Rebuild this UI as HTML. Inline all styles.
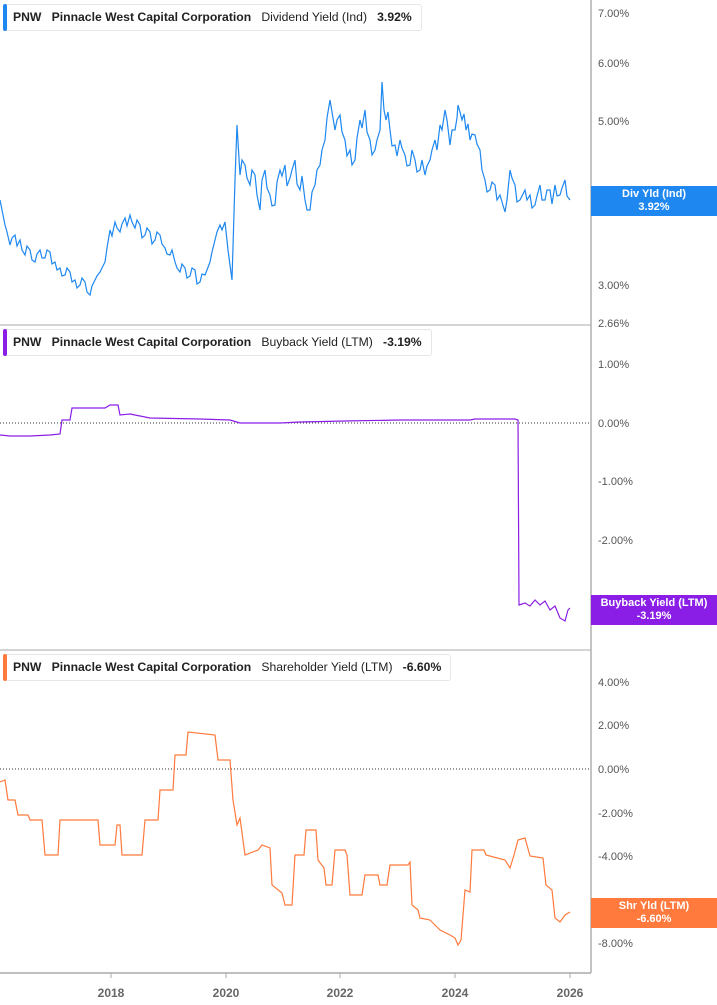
<!DOCTYPE html>
<html><head><meta charset="utf-8"><style>
body{margin:0;background:#fff;font-family:"Liberation Sans",sans-serif}
.leg{position:absolute;left:3px;height:25px;border:1px solid #e6e6e6;border-radius:3px;background:#fff;font-size:12.2px;color:#222;line-height:25px;white-space:nowrap;padding-left:9px;padding-right:9px}
.leg b{font-weight:bold}
.leg .bar{position:absolute;left:-1px;top:-1px;width:4px;height:27px;border-radius:2px}
.lab{position:absolute;left:591px;width:126px;height:30px;color:#fff;font-size:11px;font-weight:bold;text-align:center;line-height:13px;padding-top:2px;box-sizing:border-box}
</style></head><body>
<svg width="717" height="1005" style="position:absolute;left:0;top:0" font-family="Liberation Sans" font-size="11" fill="#555">
<line x1="591" y1="0" x2="591" y2="973" stroke="#888"/>
<line x1="0" y1="325" x2="591" y2="325" stroke="#aaa"/>
<line x1="0" y1="650" x2="591" y2="650" stroke="#aaa"/>
<line x1="0" y1="973" x2="591" y2="973" stroke="#aaa" stroke-width="1.5"/>
<line x1="0" y1="423" x2="591" y2="423" stroke="#333" stroke-dasharray="1,2"/>
<line x1="0" y1="769" x2="591" y2="769" stroke="#333" stroke-dasharray="1,2"/>
<g>
<text x="598" y="17">7.00%</text><text x="598" y="67">6.00%</text><text x="598" y="125">5.00%</text><text x="598" y="289">3.00%</text><text x="598" y="327">2.66%</text>
<text x="598" y="368">1.00%</text><text x="598" y="427">0.00%</text><text x="598" y="485">-1.00%</text><text x="598" y="544">-2.00%</text>
<text x="598" y="686">4.00%</text><text x="598" y="729">2.00%</text><text x="598" y="773">0.00%</text><text x="598" y="817">-2.00%</text><text x="598" y="860">-4.00%</text><text x="598" y="947">-8.00%</text>
</g>
<g font-weight="bold" font-size="12" fill="#666" text-anchor="middle">
<text x="111" y="997">2018</text><text x="226" y="997">2020</text><text x="340" y="997">2022</text><text x="455" y="997">2024</text><text x="570" y="997">2026</text>
</g>
<g stroke="#aaa"><line x1="111" y1="973" x2="111" y2="978"/><line x1="226" y1="973" x2="226" y2="978"/><line x1="340" y1="973" x2="340" y2="978"/><line x1="455" y1="973" x2="455" y2="978"/><line x1="570" y1="973" x2="570" y2="978"/></g>
<polyline fill="none" stroke="#1e88f0" stroke-width="1.2" points="0,200 3,215 5,225 7,232 10,245 12,238 15,235 17,246 20,240 22,250 25,255 27,246 30,250 32,260 35,262 37,254 40,250 42,258 45,258 47,250 50,252 52,264 55,262 57,270 60,268 62,276 65,275 67,268 70,272 72,282 75,280 77,288 80,285 82,278 85,282 87,292 90,295 92,286 95,280 97,276 100,272 102,268 105,262 107,248 110,230 112,236 115,222 117,228 120,232 122,224 125,218 127,226 130,215 132,222 135,228 137,220 140,225 142,238 145,235 147,228 150,232 152,244 155,240 157,232 160,235 162,244 165,248 167,254 170,255 172,250 175,262 177,268 180,272 182,264 185,268 187,278 190,276 192,268 195,270 197,284 200,282 202,274 205,275 207,270 210,262 212,252 215,240 217,232 220,225 222,230 225,222 228,250 232,280 235,180 237,125 240,175 242,160 245,165 247,178 250,185 252,170 255,175 257,195 260,210 262,180 265,170 267,188 270,195 272,206 275,205 277,182 280,170 282,176 285,165 287,186 290,178 292,170 295,160 297,184 300,190 302,176 305,200 307,210 310,210 312,192 315,185 317,170 320,165 322,150 325,140 327,118 330,100 332,112 335,130 337,120 340,115 342,132 345,140 347,156 350,150 352,165 355,160 357,138 360,120 362,128 365,110 367,132 370,140 372,155 375,150 377,140 380,130 382,82 384,110 386,120 388,112 390,130 392,146 395,145 397,156 400,140 402,148 405,155 407,166 410,165 412,150 415,160 417,172 420,170 422,160 425,175 427,166 430,160 432,150 435,140 437,150 440,125 442,130 445,110 447,120 450,145 452,130 455,130 457,118 458,105 460,112 462,120 464,114 466,130 468,124 470,140 472,134 475,135 477,144 480,150 482,170 485,180 487,192 490,190 492,182 495,185 497,200 500,195 502,202 505,212 507,200 510,170 512,178 515,185 517,202 520,200 522,196 525,190 527,200 530,195 532,208 535,205 537,196 540,185 542,200 545,200 547,190 550,190 552,204 555,185 557,196 560,195 562,188 565,180 567,196 570,200"/>
<polyline fill="none" stroke="#8a1ee6" stroke-width="1.2" points="0,435 10,436 30,436 50,435 60,434 62,420 70,420 72,408 90,408 105,408 110,405 118,405 120,415 130,414 150,418 200,419 230,420 240,423 280,423 300,422 345,421 400,420 470,420 475,419 515,419 518,420 519,605 525,603 530,606 535,600 540,605 545,601 550,610 555,606 560,618 565,621 568,610 570,608"/>
<polyline fill="none" stroke="#ff7a3c" stroke-width="1.2" points="0,782 5,780 8,800 15,800 18,815 28,815 30,820 42,820 45,855 58,855 60,820 98,820 100,845 115,845 117,825 120,825 122,855 142,855 145,820 158,820 160,790 173,790 175,755 186,755 188,732 215,735 218,760 230,760 233,800 237,825 240,818 245,855 258,850 262,845 270,848 272,885 282,893 285,905 292,905 295,855 304,855 306,830 316,830 318,860 324,868 326,885 332,885 335,850 345,850 347,855 350,895 362,895 365,875 378,875 380,885 387,885 390,865 408,865 410,862 412,905 418,910 420,918 430,920 440,930 450,935 455,938 458,945 461,940 465,890 470,892 472,850 484,850 486,855 505,860 510,868 514,855 518,840 525,838 530,856 543,858 546,885 552,890 555,918 560,922 565,915 570,912"/>
</svg>
<div class="leg" style="top:4px"><span class="bar" style="background:#1e88f0"></span><b>PNW</b>&nbsp;&nbsp;&nbsp;<b>Pinnacle West Capital Corporation</b>&nbsp;&nbsp;&nbsp;Dividend Yield (Ind)&nbsp;&nbsp;&nbsp;<b>3.92%</b></div>
<div class="leg" style="top:329px"><span class="bar" style="background:#8a1ee6"></span><b>PNW</b>&nbsp;&nbsp;&nbsp;<b>Pinnacle West Capital Corporation</b>&nbsp;&nbsp;&nbsp;Buyback Yield (LTM)&nbsp;&nbsp;&nbsp;<b>-3.19%</b></div>
<div class="leg" style="top:654px"><span class="bar" style="background:#ff7a3c"></span><b>PNW</b>&nbsp;&nbsp;&nbsp;<b>Pinnacle West Capital Corporation</b>&nbsp;&nbsp;&nbsp;Shareholder Yield (LTM)&nbsp;&nbsp;&nbsp;<b>-6.60%</b></div>
<div class="lab" style="top:186px;background:#1e88f0">Div Yld (Ind)<br>3.92%</div>
<div class="lab" style="top:595px;background:#8a1ee6">Buyback Yield (LTM)<br>-3.19%</div>
<div class="lab" style="top:898px;background:#ff7a3c">Shr Yld (LTM)<br>-6.60%</div>
</body></html>
